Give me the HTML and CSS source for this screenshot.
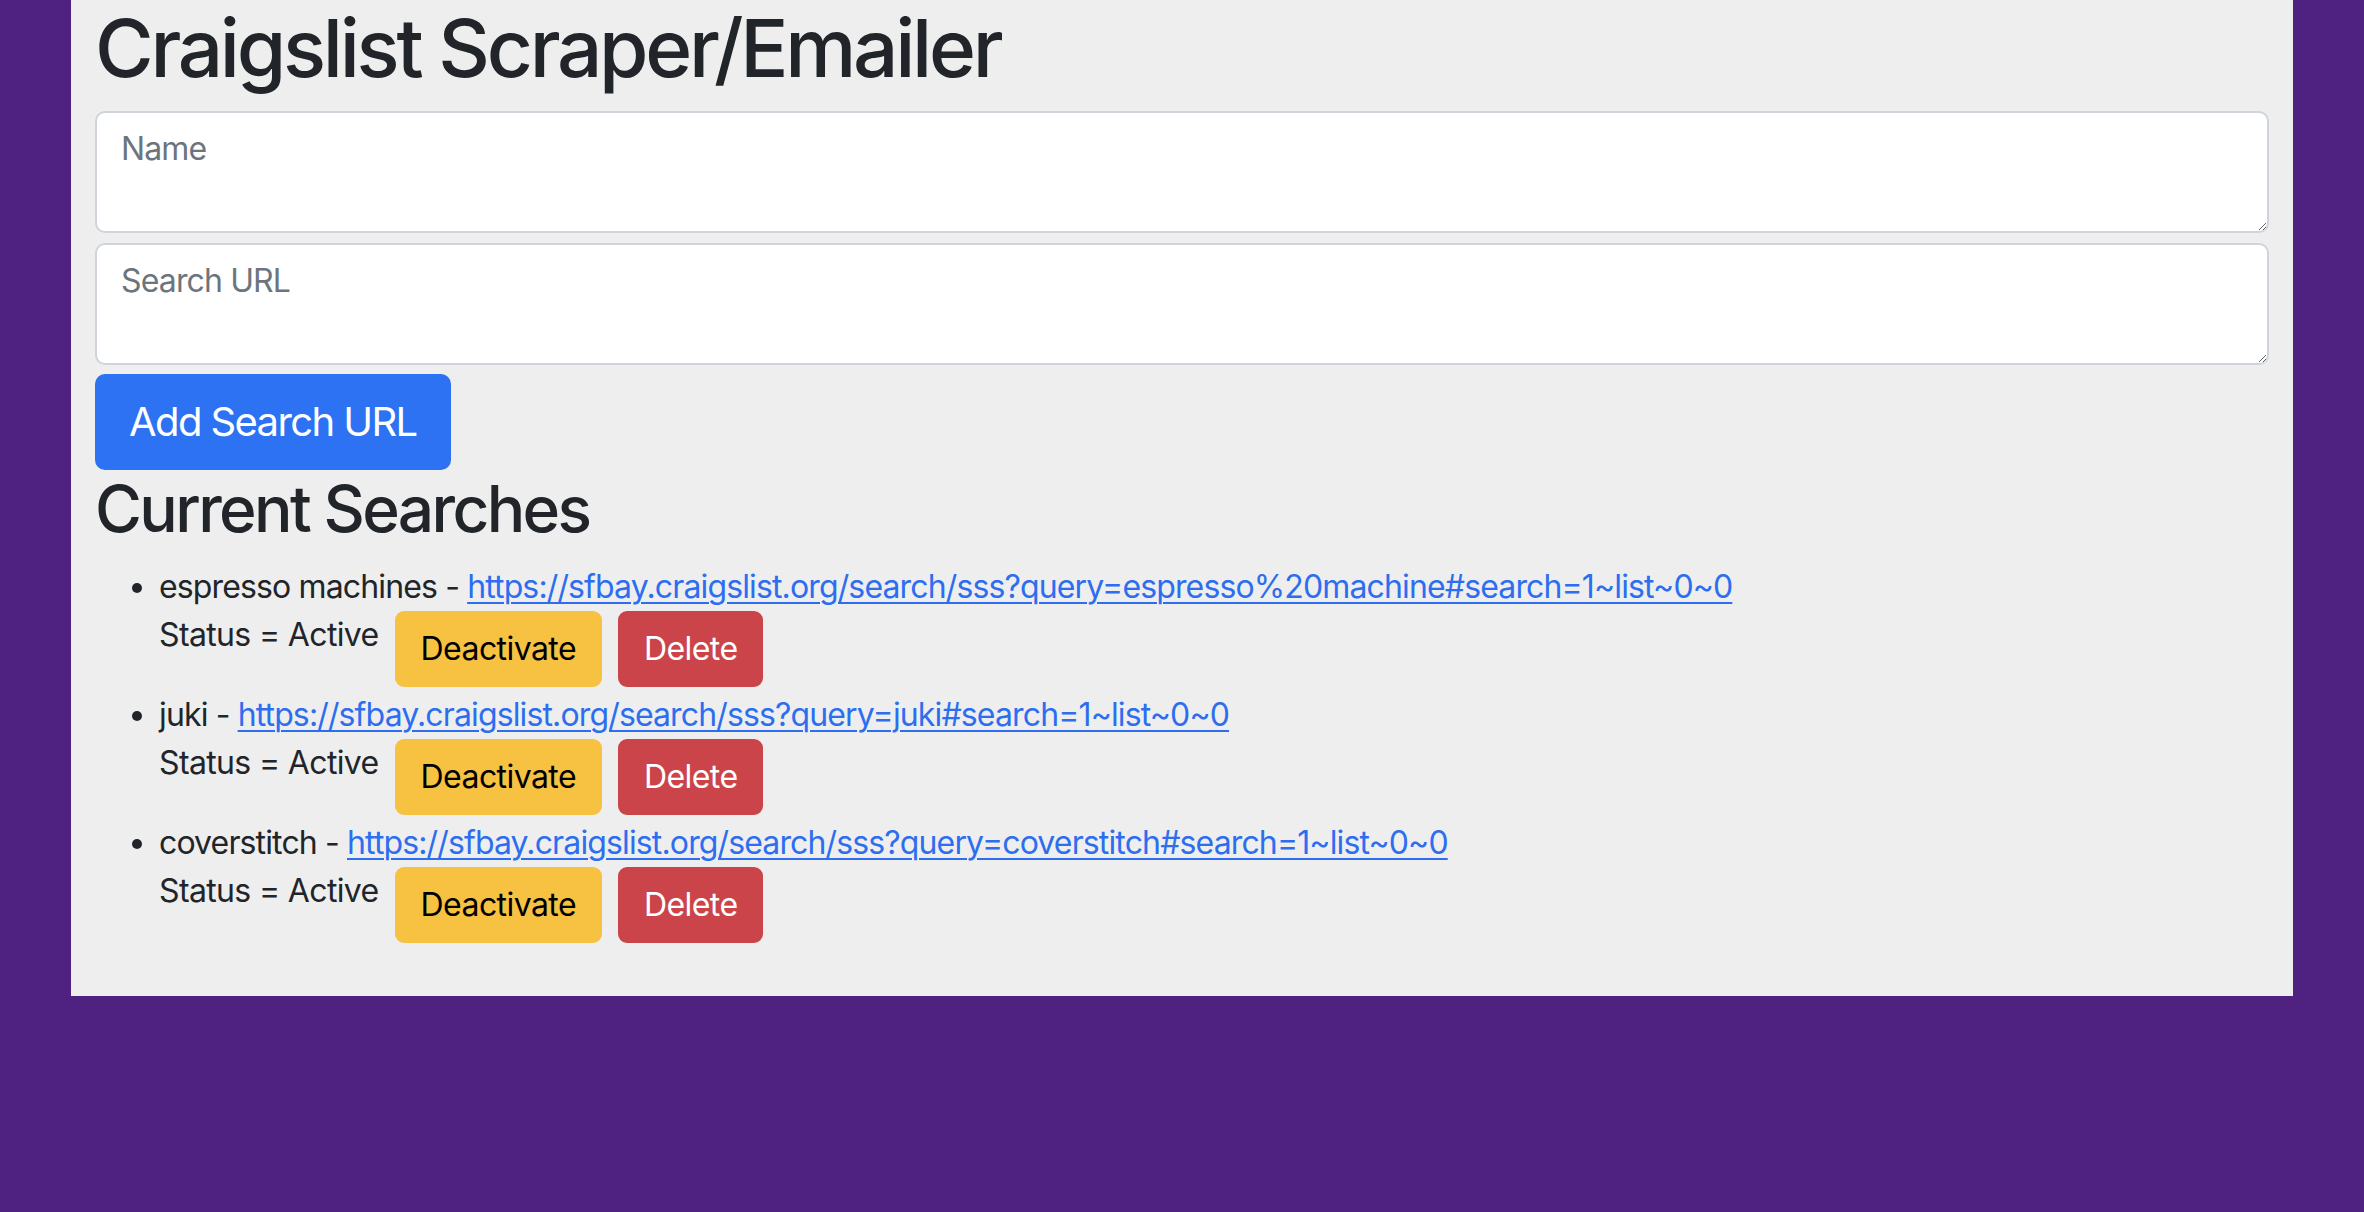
FILE: index.html
```html
<!DOCTYPE html>
<html lang="en">
<head>
<meta charset="utf-8">
<title>Craigslist Scraper/Emailer</title>
<link rel="stylesheet" href="styles.css">
</head>
<body>
<div class="page">
  <h1 class="title">Craigslist Scraper/Emailer</h1>
  <textarea class="field field-name" placeholder="Name"></textarea>
  <textarea class="field field-url" placeholder="Search URL"></textarea>
  <button class="btn btn-lg btn-primary">Add Search URL</button>
  <h2 class="subtitle">Current Searches</h2>
  <ul class="searches">
    <li class="search">
      <div class="search-line">espresso machines - <a href="#">https://sfbay.craigslist.org/search/sss?query=espresso%20machine#search=1~list~0~0</a></div>
      <div class="search-status">
        <span class="status-text">Status = Active</span>
        <button class="btn btn-warning">Deactivate</button>
        <button class="btn btn-danger">Delete</button>
      </div>
    </li>
    <li class="search">
      <div class="search-line">juki - <a href="#">https://sfbay.craigslist.org/search/sss?query=juki#search=1~list~0~0</a></div>
      <div class="search-status">
        <span class="status-text">Status = Active</span>
        <button class="btn btn-warning">Deactivate</button>
        <button class="btn btn-danger">Delete</button>
      </div>
    </li>
    <li class="search">
      <div class="search-line">coverstitch - <a href="#">https://sfbay.craigslist.org/search/sss?query=coverstitch#search=1~list~0~0</a></div>
      <div class="search-status">
        <span class="status-text">Status = Active</span>
        <button class="btn btn-warning">Deactivate</button>
        <button class="btn btn-danger">Delete</button>
      </div>
    </li>
  </ul>
</div>
</body>
</html>
```

FILE: styles.css
```css
html, body {
  margin: 0;
  padding: 0;
}
body {
  background: #4f2282;
  font-family: Inter, "Noto Sans", "Liberation Sans", sans-serif;
  color: #212529;
  font-size: 32px;
  line-height: 48px;
  letter-spacing: -0.027em;
  min-height: 1212px;
}
.page {
  margin: 0 71px;
  background: #eeeeee;
  padding: 0 24px 21px;
}
.title {
  margin: 0 0 15px;
  font-size: 80px;
  line-height: 96px;
  font-weight: 500;
  letter-spacing: -0.041em;
}
.field {
  display: block;
  box-sizing: border-box;
  width: 100%;
  height: 122px;
  margin: 0 0 10px;
  padding: 12px 24px;
  border: 2px solid #ced4da;
  border-radius: 10px;
  background: #ffffff;
  font-family: inherit;
  font-size: 32px;
  line-height: 48px;
  letter-spacing: -0.027em;
  color: #212529;
}
.field::placeholder {
  color: #6c757d;
}
.field-url {
  margin-bottom: 9px;
}
.btn {
  display: inline-block;
  font-family: inherit;
  font-size: 32px;
  line-height: 48px;
  font-weight: 400;
  letter-spacing: -0.018em;
  padding: 12px 24px;
  border: 2px solid transparent;
  border-radius: 9px;
  cursor: pointer;
}
.btn-lg {
  font-size: 40px;
  line-height: 60px;
  padding: 16px 32px;
  border-radius: 10px;
  letter-spacing: -0.04em;
}
.btn-primary {
  background: #2c72f2;
  border-color: #2c72f2;
  color: #ffffff;
}
.btn-warning {
  background: #f7c142;
  border-color: #f7c142;
  color: #000000;
}
.btn-danger {
  background: #cb444a;
  border-color: #cb444a;
  color: #ffffff;
}
.subtitle {
  margin: 0 0 16px;
  font-size: 64px;
  line-height: 77px;
  font-weight: 500;
  letter-spacing: -0.041em;
}
.searches {
  margin: 0 0 32px;
  padding-left: 64px;
}
.search-line a {
  color: #2d6ef0;
  text-decoration: underline;
  text-decoration-thickness: 2px;
  text-underline-offset: 4px;
}
.search-status {
  display: flex;
  align-items: flex-start;
  gap: 16px;
  margin-bottom: 4px;
}
.status-text {
  letter-spacing: -0.02em;
}
```
